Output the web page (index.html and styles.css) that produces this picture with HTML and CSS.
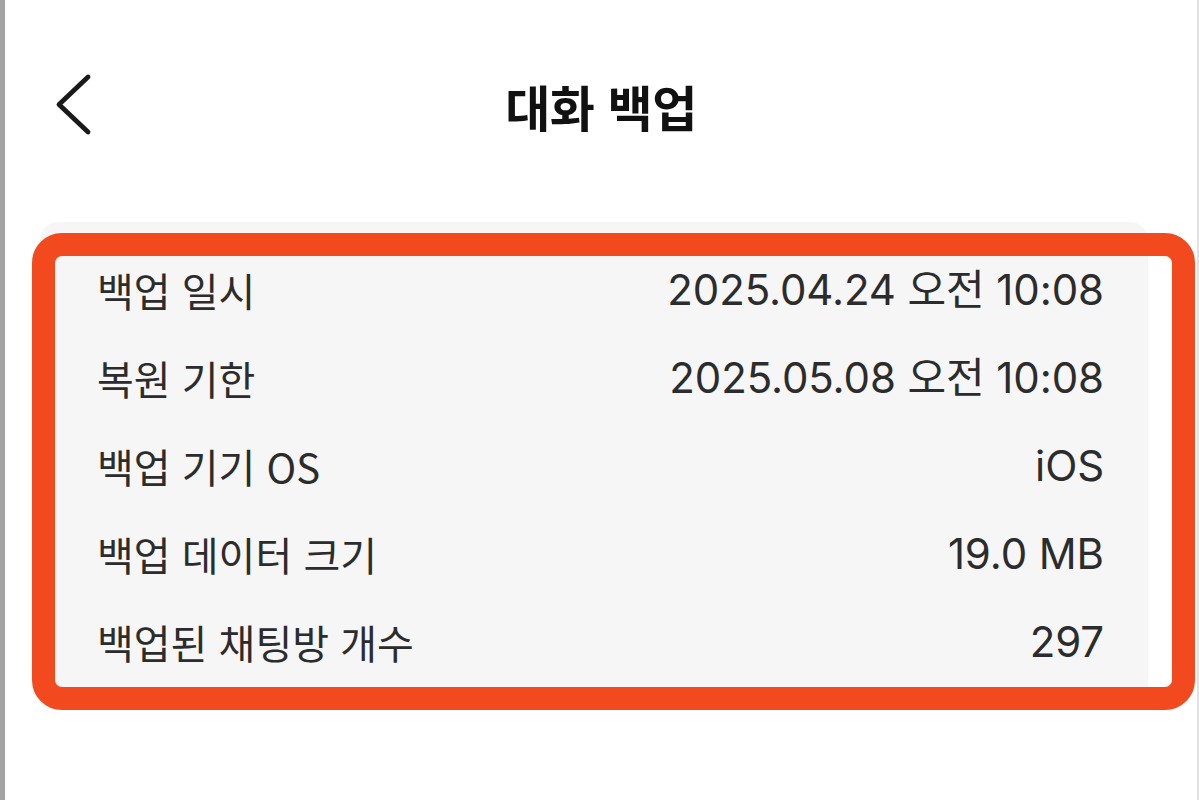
FILE: index.html
```html
<!DOCTYPE html>
<html lang="ko">
<head>
<meta charset="utf-8">
<title>대화 백업</title>
<link rel="stylesheet" href="styles.css">
</head>
<body>
<div class="screen">
  <header class="topbar">
    <button class="back" aria-label="뒤로">
      <svg width="40" height="64" viewBox="0 0 40 64">
        <polyline points="34,5 5,32.5 34,60" fill="none" stroke="#1a1a1a" stroke-width="4.8" stroke-linecap="round" stroke-linejoin="round"/>
      </svg>
    </button>
    <h1 class="title">대화 백업</h1>
  </header>

  <section class="info">
    <div class="card">
      <div class="row"><span class="label">백업 일시</span><span class="value">2025.04.24 오전 10:08</span></div>
      <div class="row"><span class="label">복원 기한</span><span class="value">2025.05.08 오전 10:08</span></div>
      <div class="row"><span class="label">백업 기기 OS</span><span class="value">iOS</span></div>
      <div class="row"><span class="label">백업 데이터 크기</span><span class="value">19.0 MB</span></div>
      <div class="row"><span class="label">백업된 채팅방 개수</span><span class="value">297</span></div>
    </div>
    <div class="highlight"></div>
  </section>
</div>
</body>
</html>
```

FILE: styles.css
```css
html, body {
  margin: 0;
  padding: 0;
  background: #ffffff;
}

.screen {
  height: 800px;
  box-sizing: border-box;
  border-left: 5px solid #a3a3a3;
  border-right: 2px solid #e2e2e2;
  background: #ffffff;
  font-family: Inter, "Noto Sans CJK KR", sans-serif;
  color: #2c2c2c;
}

.topbar {
  position: relative;
  height: 210px;
  display: flex;
  align-items: center;
  justify-content: center;
}

.back {
  position: absolute;
  left: 49px;
  top: 72px;
  width: 40px;
  height: 64px;
  padding: 0;
  border: 0;
  background: none;
  display: flex;
}

.title {
  margin: 0;
  font-family: "Noto Sans CJK KR", sans-serif;
  font-size: 49px;
  font-weight: 700;
  color: #111111;
  letter-spacing: -0.5px;
  line-height: 1;
}

.info {
  position: relative;
  padding-top: 12px;
}

.card {
  margin-left: 35px;
  width: 1108px;
  box-sizing: border-box;
  background: #f6f6f6;
  border-radius: 18px;
  padding: 24px 44px 16px 57px;
}

.row {
  height: 88px;
  display: flex;
  align-items: center;
  justify-content: space-between;
  line-height: 1;
}

.label {
  font-family: "Noto Sans CJK KR", sans-serif;
  font-size: 40px;
  color: #2c2c2c;
}

.value {
  font-size: 42px;
  font-weight: 380;
  color: #2c2c2c;
  letter-spacing: -0.1px;
}

/* orange outline drawn over the card */
.highlight {
  position: absolute;
  left: 27px;
  top: 23px;
  width: 1163px;
  height: 477px;
  box-sizing: border-box;
  border: 23px solid #f2491f;
  border-radius: 30px;
  pointer-events: none;
}
```
